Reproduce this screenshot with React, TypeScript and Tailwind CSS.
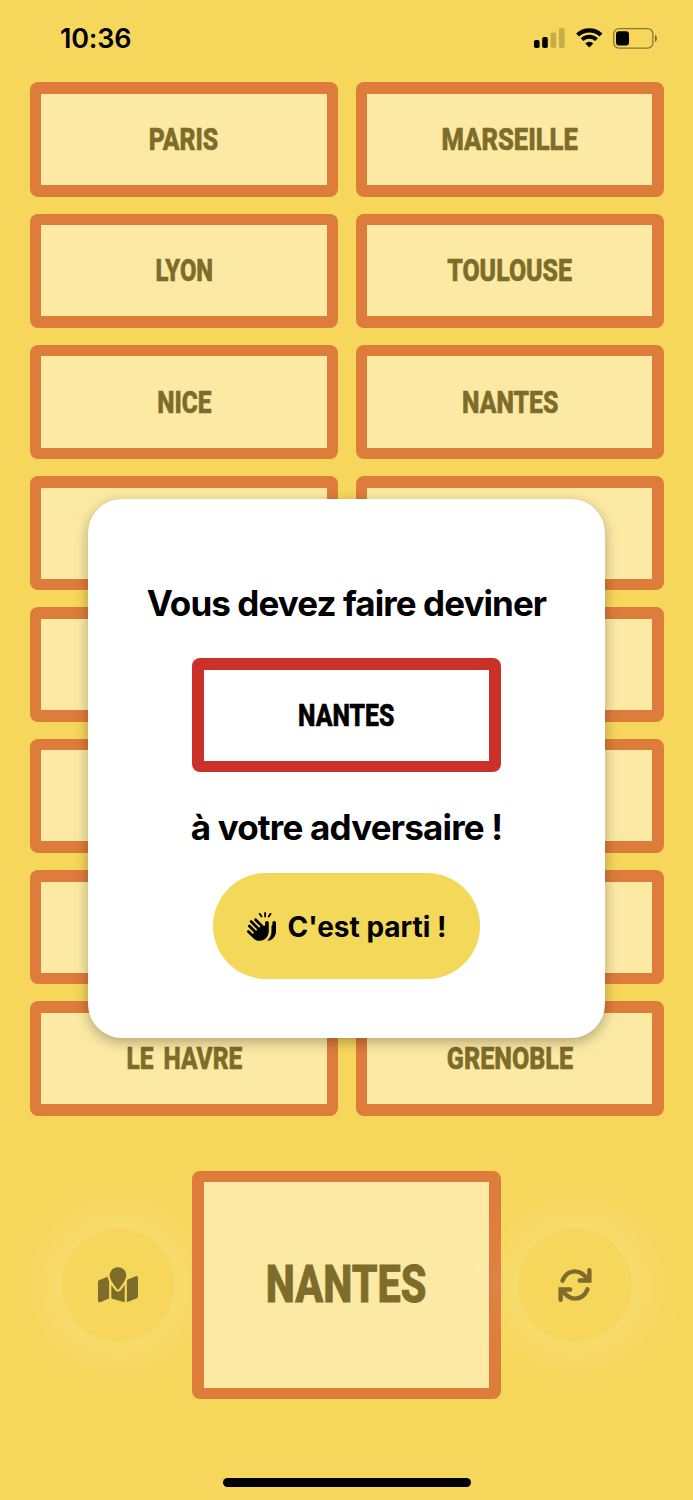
import { FaHandsClapping, FaMapLocation } from 'react-icons/fa6';

const cities = [
  { name: 'Paris', stretch: 'scale-x-[0.8]' },
  { name: 'Marseille', stretch: 'scale-x-[0.825]' },
  { name: 'Lyon', stretch: 'scale-x-[0.77]' },
  { name: 'Toulouse', stretch: 'scale-x-[0.805]' },
  { name: 'Nice', stretch: 'scale-x-[0.79]' },
  { name: 'Nantes', stretch: 'scale-x-[0.8]' },
  { name: 'Montpellier', stretch: 'scale-x-[0.8]' },
  { name: 'Strasbourg', stretch: 'scale-x-[0.8]' },
  { name: 'Bordeaux', stretch: 'scale-x-[0.8]' },
  { name: 'Lille', stretch: 'scale-x-[0.8]' },
  { name: 'Rennes', stretch: 'scale-x-[0.8]' },
  { name: 'Reims', stretch: 'scale-x-[0.8]' },
  { name: 'Toulon', stretch: 'scale-x-[0.8]' },
  { name: 'Dijon', stretch: 'scale-x-[0.8]' },
  { name: 'Le Havre', stretch: 'scale-x-[0.79] [word-spacing:5px]' },
  { name: 'Grenoble', stretch: 'scale-x-[0.81]' },
];

function StatusBar() {
  return (
    <div className="flex h-[82px] items-start justify-between pt-[19px] pr-[35px] pl-[60px]">
      <span className="pt-px text-[27px] leading-[38px] font-semibold tracking-[-0.2px]">10:36</span>
      <div className="flex h-[38px] items-center">
        <svg width="32" height="20" viewBox="0 0 32 20">
          <rect x="0" y="12" width="5.6" height="8" rx="1.8" />
          <rect x="8.2" y="9" width="5.6" height="11" rx="1.8" />
          <rect x="16.6" y="4.5" width="5.6" height="15.5" rx="1.8" opacity="0.2" />
          <rect x="25" y="0" width="5.6" height="20" rx="1.8" opacity="0.2" />
        </svg>
        <svg className="ml-[10px]" width="27" height="20" viewBox="0 0 27 20" fill="none" stroke="black">
          <path d="M1.6 7.1A16.6 16.6 0 0 1 25 7.1" strokeWidth="4.2" />
          <path d="M6.1 11.7A10.2 10.2 0 0 1 20.5 11.7" strokeWidth="3.9" />
          <path d="M13.3 19.5L9.3 15.4A5.7 5.7 0 0 1 17.3 15.4Z" fill="black" stroke="none" />
        </svg>
        <svg className="ml-[10px]" width="45" height="21" viewBox="0 0 45 21">
          <rect x="0.7" y="0.7" width="39.2" height="19.4" rx="5.2" fill="none" stroke="black" strokeWidth="1.3" opacity="0.45" />
          <rect x="3" y="3.2" width="13" height="14.4" rx="3" />
          <path d="M42 7v7c2.600-1.200 2.600-5.800 0-7Z" opacity="0.5" />
        </svg>
      </div>
    </div>
  );
}

function RefreshIcon() {
  return (
    <svg width="34" height="34" viewBox="0 0 34 34" fill="none" stroke="currentColor" strokeWidth="4.4" strokeLinecap="round">
      <path d="M4.5 12.600C7 6.500 11.500 3.400 17 3.400c5.200 0 9.500 3.300 13 8.600" />
      <path d="M31.400 2.300v10.200h-9.600" strokeLinejoin="miter" />
      <path d="M29.500 21.400C27 27.500 22.500 30.600 17 30.600c-5.200 0-9.500-3.300-13-8.600" />
      <path d="M2.600 31.700v-10.200h9.600" strokeLinejoin="miter" />
    </svg>
  );
}

function CityCard({ name, stretch }: { name: string; stretch: string }) {
  return (
    <div className="h-[114.3px] rounded-lg bg-[#de7c3c] p-[11.6px]">
      <div className="flex h-full items-center justify-center bg-[#fceaa4]">
        <span
          className={`font-['Roboto',sans-serif] text-[31px] leading-none font-extrabold whitespace-nowrap text-[#7e6c2a] uppercase [-webkit-text-stroke:0.6px] ${stretch}`}
        >
          {name}
        </span>
      </div>
    </div>
  );
}

function WordModal() {
  return (
    <div className="absolute top-[498.5px] left-[88px] flex h-[539.5px] w-[517px] flex-col items-center rounded-[34px] bg-white pt-[79px] shadow-[0_4px_14px_rgba(0,0,0,0.3)]">
      <p className="text-[35px] leading-[50px] font-bold tracking-[-0.92px] whitespace-nowrap">Vous devez faire deviner</p>
      <div className="mt-[30.5px] h-[114.3px] w-[309px] rounded-lg bg-[#cb3129] p-[11.6px]">
        <div className="flex h-full items-center justify-center bg-white">
          <span className="scale-x-[0.8] font-['Roboto',sans-serif] text-[31px] leading-none font-extrabold uppercase [-webkit-text-stroke:0.6px]">
            Nantes
          </span>
        </div>
      </div>
      <p className="mt-[30px] text-[35px] leading-[50px] font-bold tracking-[-0.8px] whitespace-nowrap">à votre adversaire !</p>
      <button className="mt-[21px] flex h-[106px] w-[267.5px] items-center justify-center gap-[12px] rounded-full bg-[#f3d85a]">
        <FaHandsClapping size={29} />
        <span className="pt-px text-[28px] font-bold whitespace-nowrap">C'est parti !</span>
      </button>
    </div>
  );
}

export default function App() {
  return (
    <div className="relative h-[1500px] w-[693px] overflow-hidden bg-[#f7d75b] font-['Inter',sans-serif] text-black">
      <StatusBar />

      <div className="grid grid-cols-2 gap-x-[17.5px] gap-y-[17px] pt-[0.3px] pr-[29px] pl-[29.7px]">
        {cities.map((city) => (
          <CityCard key={city.name} name={city.name} stretch={city.stretch} />
        ))}
      </div>

      <div className="mt-[55px] flex items-center justify-center gap-[17px]">
        <button className="flex size-[113.5px] items-center justify-center rounded-full bg-[#f7d75b] text-[#7e6c2a] shadow-[0_0_58px_rgba(255,255,255,0.3)]">
          <FaMapLocation size={40} />
        </button>
        <div className="h-[228.5px] w-[309px] rounded-lg bg-[#de7c3c] p-[11.6px]">
          <div className="flex h-full items-center justify-center bg-[#fceaa4]">
            <span className="scale-x-[0.81] font-['Roboto',sans-serif] text-[51px] leading-none font-extrabold text-[#7e6c2a] uppercase [-webkit-text-stroke:0.9px]">
              Nantes
            </span>
          </div>
        </div>
        <button className="flex size-[113.5px] items-center justify-center rounded-full bg-[#f7d75b] text-[#7e6c2a] shadow-[0_0_58px_rgba(255,255,255,0.3)]">
          <RefreshIcon />
        </button>
      </div>

      <WordModal />

      <div className="mx-auto mt-[78.5px] h-[9px] w-[248px] rounded-full bg-black" />
    </div>
  );
}
